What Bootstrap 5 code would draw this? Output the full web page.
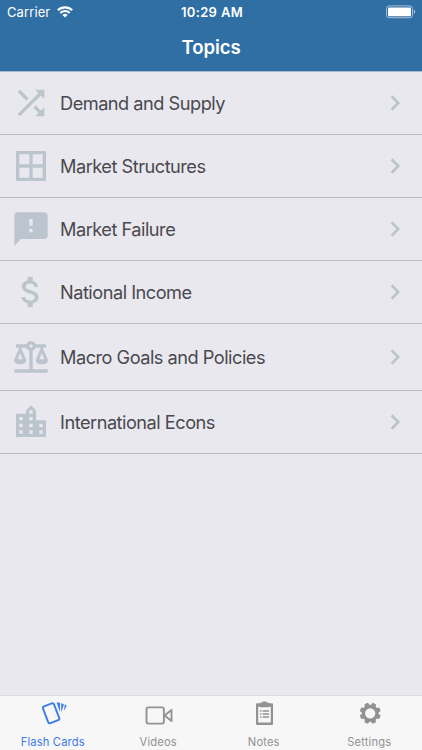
<!DOCTYPE html>
<html lang="en">
<head>
<meta charset="utf-8">
<meta name="viewport" content="width=device-width, initial-scale=1">
<title>Topics</title>
<link href="https://cdn.jsdelivr.net/npm/bootstrap@5.3.0/dist/css/bootstrap.min.css" rel="stylesheet">
<style>
body{font-family:Inter,"Liberation Sans",sans-serif;background:#e9e8ee;height:750px;overflow:hidden}
.top-bar{background:#306fa4;height:72px;border-bottom:1px solid #a9bdd2}
.status{height:24px;font-size:13px;line-height:24px;padding:0 6px 0 7px}
.status>*{flex:1 1 0}
.carrier{letter-spacing:.1px}
.carrier svg{margin-left:7px}
.clock{font-weight:600;letter-spacing:.35px;padding-left:1px}
.page-title{font-size:18.6px;line-height:24px;font-weight:600;letter-spacing:-.1px;margin-top:11px}
.topic{height:63px;padding:0 21px 0 11px;border-bottom:1px solid #bcbbc1;color:#4a494e;font-size:18.2px;letter-spacing:-.5px;line-height:24px}
.topic.tall{height:67px}
.topic.tall .glyph{margin-top:-3px}
.topic .glyph{width:40px;height:40px;fill:#bcc5ce;margin-right:9px}
.topic .chev{width:12px;height:18px;stroke:#bcc5ce}
.tabs{height:55px;background:#f7f7f7;border-top:1px solid #dcdbe0}
.tab{flex:1 1 0;color:#929292;font-size:11.2px;line-height:14px;letter-spacing:.15px;padding-top:3px}
.tab:hover{color:#929292}
.tab.current{color:#3d7be6}
.tab svg{width:30px;height:30px;margin-bottom:6px}
</style>
<script src="https://cdn.jsdelivr.net/npm/bootstrap@5.3.0/dist/js/bootstrap.bundle.min.js"></script>
</head>
<body class="d-flex flex-column m-0">
<header class="top-bar text-white flex-shrink-0">
  <div class="status d-flex align-items-center">
    <div class="d-flex align-items-center carrier"><span>Carrier</span>
      <svg width="16" height="12" viewBox="0 0 16 12" fill="none" stroke="#fff" stroke-width="2.1"><path d="M.8 4.300a10.300 10.300 0 0 1 14.400 0M3.300 7a6.700 6.700 0 0 1 9.400 0"/><path d="M8 11.600 5.400 9a3.800 3.800 0 0 1 5.200 0z" fill="#fff" stroke="none"/></svg>
    </div>
    <div class="text-center clock">10:29 AM</div>
    <div class="d-flex justify-content-end">
      <svg width="31" height="14" viewBox="0 0 31 14"><rect x="1.500" y=".9" width="26" height="11.800" rx="2.600" fill="none" stroke="#a5c0d8"/><rect x="3" y="2.400" width="23" height="8.800" rx="1" fill="#fff"/><path d="M28.900 4.800q1.400.6 1.400 2t-1.400 2z" fill="#a5c0d8"/></svg>
    </div>
  </div>
  <h1 class="page-title text-center mb-0">Topics</h1>
</header>
<main class="flex-grow-1">
  <div class="topic d-flex align-items-center"><svg class="glyph" viewBox="0 0 24 24"><path d="M10.590 9.170 5.410 4 4 5.410l5.170 5.170zM14.500 4l2.040 2.040L4 18.590 5.410 20 17.960 7.460 20 9.500V4zm.33 9.410-1.410 1.410 3.130 3.130L14.500 20H20v-5.500l-2.040 2.040z"/></svg><span class="flex-grow-1">Demand and Supply</span><svg class="chev" viewBox="0 0 12 18"><path d="M2.600 2.200 9.200 9l-6.600 6.800" fill="none" stroke-width="2.700"/></svg></div>
  <div class="topic d-flex align-items-center"><svg class="glyph" viewBox="0 0 24 24"><path d="M3 3v18h18V3zm8 16H5v-6h6zm0-8H5V5h6zm8 8h-6v-6h6zm0-8h-6V5h6z"/></svg><span class="flex-grow-1">Market Structures</span><svg class="chev" viewBox="0 0 12 18"><path d="M2.600 2.200 9.200 9l-6.600 6.800" fill="none" stroke-width="2.700"/></svg></div>
  <div class="topic d-flex align-items-center"><svg class="glyph" viewBox="0 0 24 24"><path d="M20 2H4c-1.100 0-1.990.9-1.990 2L2 22l4-4h14c1.100 0 2-.9 2-2V4c0-1.100-.9-2-2-2zm-7 12h-2v-2h2zm0-4h-2V6h2z"/></svg><span class="flex-grow-1">Market Failure</span><svg class="chev" viewBox="0 0 12 18"><path d="M2.600 2.200 9.200 9l-6.600 6.800" fill="none" stroke-width="2.700"/></svg></div>
  <div class="topic d-flex align-items-center"><svg class="glyph" viewBox="0 0 24 24"><path d="M11.800 10.900c-2.270-.59-3-1.200-3-2.150 0-1.090 1.010-1.850 2.700-1.850 1.780 0 2.440.85 2.500 2.100h2.210c-.07-1.720-1.120-3.300-3.210-3.810V3h-3v2.160c-1.940.42-3.500 1.680-3.500 3.610 0 2.310 1.910 3.460 4.700 4.130 2.500.6 3 1.480 3 2.410 0 .69-.49 1.790-2.700 1.790-2.060 0-2.870-.92-2.980-2.100h-2.200c.12 2.190 1.760 3.420 3.680 3.830V21h3v-2.150c1.950-.37 3.500-1.500 3.500-3.550 0-2.840-2.430-3.810-4.700-4.400z"/></svg><span class="flex-grow-1">National Income</span><svg class="chev" viewBox="0 0 12 18"><path d="M2.600 2.200 9.200 9l-6.600 6.800" fill="none" stroke-width="2.700"/></svg></div>
  <div class="topic tall d-flex align-items-center"><svg class="glyph" viewBox="0 0 24 24"><path d="M12 3C10.730 3 9.600 3.800 9.180 5H3v2h1.950L2 14c-.47 2 1 3 3.500 3S9.560 16 9 14L6.050 7h3.120c.33.85.98 1.500 1.830 1.830V20H2v2h20v-2h-9V8.820c.85-.32 1.500-.97 1.820-1.820h3.130L15 14c-.47 2 1 3 3.500 3s4.060-1 3.500-3l-2.950-7H21V5h-6.170C14.400 3.800 13.270 3 12 3zm0 2a1 1 0 1 1 0 2 1 1 0 0 1 0-2zM5.500 10.250 7 14H4zM18.500 10.250 20 14h-3z"/></svg><span class="flex-grow-1">Macro Goals and Policies</span><svg class="chev" viewBox="0 0 12 18"><path d="M2.600 2.200 9.200 9l-6.600 6.800" fill="none" stroke-width="2.700"/></svg></div>
  <div class="topic d-flex align-items-center"><svg class="glyph" viewBox="0 0 24 24"><path d="M15 11V5l-3-3-3 3v2H3v14h18V11zm-8 8H5v-2h2zm0-4H5v-2h2zm0-4H5V9h2zm6 8h-2v-2h2zm0-4h-2v-2h2zm0-4h-2V9h2zm0-4h-2V5h2zm6 12h-2v-2h2zm0-4h-2v-2h2z"/></svg><span class="flex-grow-1">International Econs</span><svg class="chev" viewBox="0 0 12 18"><path d="M2.600 2.200 9.200 9l-6.600 6.800" fill="none" stroke-width="2.700"/></svg></div>
</main>
<nav class="tabs d-flex flex-shrink-0">
  <a class="tab current d-flex flex-column align-items-center text-decoration-none" href="#"><svg viewBox="0 0 30 30"><rect x="7.200" y="5.300" width="11.800" height="18" rx="1.800" transform="rotate(-21 13.100 14.300)" fill="none" stroke="currentColor" stroke-width="1.900"/><g fill="currentColor"><path d="M18.600 3.400h2.500q1 .1 1 1.200l-.2 8.400zM23.200 4.200l1.800.5q1 .4.7 1.500l-2.500 7.200zM26.900 5.300l1.200.6q.7.500.3 1.400l-2.600 4.700z"/></g></svg><span>Flash Cards</span></a>
  <a class="tab d-flex flex-column align-items-center text-decoration-none" href="#"><svg viewBox="0 0 30 30"><g fill="none" stroke="currentColor" stroke-width="1.900" stroke-linejoin="round"><rect x="3.500" y="8.400" width="17.400" height="16.200" rx="2"/><path d="m21.500 16.500 7-5.600v11.200z"/></g></svg><span>Videos</span></a>
  <a class="tab d-flex flex-column align-items-center text-decoration-none" href="#"><svg viewBox="0 0 30 30"><path fill="currentColor" fill-rule="evenodd" d="M8 4.200h3.300v-.8h2l.5-.9h3.400l.5.900h2v.8H23q1 0 1 1v19.700q0 1-1 1H8q-1 0-1-1V5.200q0-1 1-1zm1.200 3.500v15.900h12.600V7.700H20v.5h-9v-.5z"/><path stroke="currentColor" stroke-width="1.300" d="M11 12h1.400m1.200 0H20M11 15h1.400m1.200 0H20M11 18h1.400m1.200 0H20"/></svg><span>Notes</span></a>
  <a class="tab d-flex flex-column align-items-center text-decoration-none" href="#"><svg viewBox="0 0 30 30"><g transform="translate(16.200 14.300)"><circle r="6.800" fill="none" stroke="currentColor" stroke-width="3.300"/><g fill="currentColor"><path id="tooth" d="M-2.700-7.300-1.900-10.500h3.800l.8 3.200z" transform="rotate(22.500)"/><use href="#tooth" transform="rotate(45)"/><use href="#tooth" transform="rotate(90)"/><use href="#tooth" transform="rotate(135)"/><use href="#tooth" transform="rotate(180)"/><use href="#tooth" transform="rotate(225)"/><use href="#tooth" transform="rotate(270)"/><use href="#tooth" transform="rotate(315)"/></g></g></svg><span>Settings</span></a>
</nav>
</body>
</html>
